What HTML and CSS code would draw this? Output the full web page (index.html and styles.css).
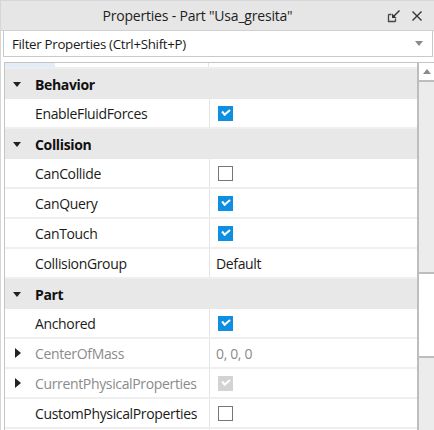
FILE: index.html
```html
<!DOCTYPE html>
<html>
<head>
<meta charset="utf-8">
<link rel="stylesheet" href="styles.css">
</head>
<body>
<div class="panel">
  <div class="titlebar">
    <span class="title">Properties - Part "Usa_gresita"</span>
    <div class="title-icons">
      <svg class="ico" width="14" height="14" viewBox="0 0 14 14"><path d="M1.5 5.5 V12.5 H8.5" fill="none" stroke="#444" stroke-width="1.3"/><path d="M1.5 5.5 H4.5 M8.5 12.5 V9.5" fill="none" stroke="#444" stroke-width="1.3"/><path d="M12.5 1.5 L6 8" stroke="#333" stroke-width="1.5"/><path d="M5 4.5 V9 H9.5 Z" fill="#333"/></svg>
      <svg class="ico" width="12" height="12" viewBox="0 0 12 12"><path d="M1.5 1.5 L10.5 10.5 M10.5 1.5 L1.5 10.5" stroke="#333" stroke-width="1.4"/></svg>
    </div>
  </div>
  <div class="filter">
    <span>Filter Properties (Ctrl+Shift+P)</span>
    <span class="dd"></span>
  </div>
  <div class="gridwrap">
    <div class="grid">
      <div class="partial"><div class="pc1"></div><div class="pc2"></div></div>
      <div class="hdr"><span class="tri-down"></span>Behavior</div>
      <div class="row"><div class="name">EnableFluidForces</div><div class="val"><span class="cb on"></span></div></div>
      <div class="hdr"><span class="tri-down"></span>Collision</div>
      <div class="row"><div class="name">CanCollide</div><div class="val"><span class="cb off"></span></div></div>
      <div class="row"><div class="name">CanQuery</div><div class="val"><span class="cb on"></span></div></div>
      <div class="row"><div class="name">CanTouch</div><div class="val"><span class="cb on"></span></div></div>
      <div class="row"><div class="name">CollisionGroup</div><div class="val">Default</div></div>
      <div class="hdr"><span class="tri-down"></span>Part</div>
      <div class="row"><div class="name">Anchored</div><div class="val"><span class="cb on"></span></div></div>
      <div class="row dis"><div class="name"><span class="tri-right"></span>CenterOfMass</div><div class="val">0, 0, 0</div></div>
      <div class="row dis"><div class="name"><span class="tri-right"></span>CurrentPhysicalProperties</div><div class="val"><span class="cb on grey"></span></div></div>
      <div class="row"><div class="name">CustomPhysicalProperties</div><div class="val"><span class="cb off"></span></div></div>
      <div class="row"><div class="name"></div><div class="val"></div></div>
    </div>
    <div class="scroll">
      <div class="sbtn up"><span class="arr-up"></span></div>
      <div class="track t1"></div>
      <div class="thumb"></div>
      <div class="track t2"></div>
      <div class="sbtn down"><span class="arr-down"></span></div>
    </div>
  </div>
</div>
</body>
</html>
```
FILE: styles.css
```css
* { box-sizing: border-box; }
html, body { margin: 0; padding: 0; background: #fff; }
body { font-family: "Open Sans", "Noto Sans", sans-serif; color: #1b1b1b; }
.panel { width: 434px; height: 430px; overflow: hidden; display: flex; flex-direction: column; border-left: 1px solid #d6d6d6; border-top: 1px solid #d6d6d6; }
.titlebar { height: 30px; flex: none; background: #e6e6e6; display: flex; align-items: center; justify-content: center; position: relative; border-bottom: 1px solid #d0d0d0; padding-right: 40px; }
.title { font-size: 14px; letter-spacing: -0.2px; color: #1e1e1e; }
.title-icons { position: absolute; right: 11px; top: 8px; display: flex; gap: 10px; align-items: center; }
.filter { height: 26px; flex: none; margin: 0 1px 0 2px; border: 1px solid #c9c9c9; border-top: none; display: flex; align-items: center; justify-content: space-between; padding: 0 8px 0 8px; font-size: 13.3px; letter-spacing: -0.3px; color: #1a1a1a; }
.dd { width: 0; height: 0; border-left: 4px solid transparent; border-right: 4px solid transparent; border-top: 5px solid #8a8a8a; margin-right: 1px; }
.gridwrap { flex: 1; display: flex; margin-top: 5px; margin-left: 3px; border-top: 1px solid #c4c4c4; border-left: 1px solid #c4c4c4; }
.grid { flex: 1; display: flex; flex-direction: column; font-size: 14px; letter-spacing: -0.35px; }
.partial { height: 6px; flex: none; display: flex; border-bottom: 2px solid #eeeeee; }
.pc1 { width: 50px; background: #e3edfa; }
.pc2 { width: 154px; border-right: 1px solid #e4e4e4; }
.hdr { height: 30px; flex: none; background: #e8e8e8; display: flex; align-items: center; font-weight: bold; padding-left: 8px; color: #111; }
.tri-down { width: 0; height: 0; border-left: 4px solid transparent; border-right: 4px solid transparent; border-top: 5px solid #222; margin-right: 14px; }
.tri-right { position: absolute; left: 10px; top: 9px; width: 0; height: 0; border-top: 5px solid transparent; border-bottom: 5px solid transparent; border-left: 6px solid #222; }
.row { height: 30px; flex: none; display: flex; border-bottom: 2px solid #efefef; }
.name { width: 205px; position: relative; border-right: 1px solid #e4e4e4; padding-left: 30px; display: flex; align-items: center; }
.val { flex: 1; display: flex; align-items: center; padding-left: 6px; }
.dis .name, .dis .val { color: #8b8b8b; }
.cb { width: 15px; height: 15px; margin-left: 2px; display: inline-block; position: relative; }
.cb.on { background: #0e8fe1; }
.cb.on::after { content: ""; position: absolute; left: 4px; top: 3px; width: 6px; height: 3px; border-left: 2px solid #fff; border-bottom: 2px solid #fff; transform: rotate(-40deg); transform-origin: center; }
.cb.grey { background: #d3d3d3; }
.cb.off { border: 1.5px solid #777; background: #fff; }
.scroll { width: 17px; flex: none; display: flex; flex-direction: column; border-left: 2px solid #bdbdbd; background: #ececec; }
.sbtn { height: 19px; flex: none; background: #fff; display: flex; align-items: center; justify-content: center; }
.up { border-bottom: 2px solid #bdbdbd; }
.down { border-top: 2px solid #bdbdbd; }
.arr-up { width: 0; height: 0; border-left: 4.5px solid transparent; border-right: 4.5px solid transparent; border-bottom: 5px solid #8a8a8a; }
.arr-down { width: 0; height: 0; border-left: 4.5px solid transparent; border-right: 4.5px solid transparent; border-top: 5px solid #8a8a8a; }
.t1 { height: 190px; flex: none; }
.thumb { height: 86px; flex: none; background: #fff; border-top: 2px solid #bdbdbd; border-bottom: 2px solid #bdbdbd; }
.t2 { flex: 1; }
```
